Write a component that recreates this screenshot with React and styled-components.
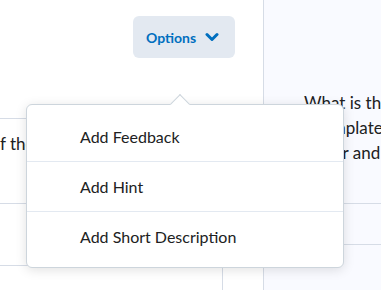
import React from 'react';
import styled, { createGlobalStyle } from 'styled-components';

const GlobalStyle = createGlobalStyle`
  html, body {
    margin: 0;
    padding: 0;
    background: #ffffff;
  }
  body {
    font-family: Lato, "Open Sans", sans-serif;
    color: #202122;
  }
  * {
    box-sizing: border-box;
  }
`;

const Page = styled.div`
  position: relative;
  display: grid;
  grid-template-columns: 264px 1fr;
  width: 381px;
  height: 290px;
  overflow: hidden;
`;

const EditorPane = styled.div`
  display: flex;
  flex-direction: column;
  border-right: 1px solid #d6dce6;
  background: #ffffff;
`;

const Toolbar = styled.div`
  display: flex;
  justify-content: flex-end;
  align-items: flex-start;
  height: 118px;
  padding: 16px 28px 0 0;
`;

const OptionsButton = styled.button`
  display: flex;
  align-items: center;
  gap: 9px;
  width: 102px;
  height: 42px;
  padding: 0 0 0 13px;
  border: none;
  border-radius: 6px;
  background: #e3e9f1;
  color: #006fbf;
  font-family: Lato, sans-serif;
  font-size: 14px;
  font-weight: 700;
  cursor: pointer;
`;

const Row = styled.div`
  height: ${p => p.$height}px;
  border-top: 1px solid #d6dce6;
  padding-top: 12px;
  font-size: 17px;
  line-height: 25px;
  white-space: nowrap;
  overflow: hidden;
`;

const FooterRow = styled.div`
  flex: 1;
  display: grid;
  grid-template-columns: 223px 1fr;
  border-top: 1px solid #d6dce6;
`;

const FooterCell = styled.div`
  border-right: ${p => (p.$divider ? '1px solid #d6dce6' : 'none')};
`;

const PreviewPane = styled.div`
  display: flex;
  flex-direction: column;
  background: #f9faff;
`;

const PreviewText = styled.div`
  height: 203px;
  padding: 90px 0 0 40px;
  font-size: 17px;
  line-height: 25px;
  white-space: nowrap;
  overflow: hidden;
`;

const PreviewRow = styled.div`
  height: ${p => p.$height}px;
  border-top: 1px solid #d6dce6;
`;

const Menu = styled.div`
  position: absolute;
  left: 26px;
  top: 104px;
  width: 318px;
  padding: 6px 0;
  background: #ffffff;
  border: 1px solid #cdd5dc;
  border-radius: 6px;
  box-shadow: 0 2px 12px rgba(0, 0, 0, 0.12);
`;

const Pointer = styled.span`
  position: absolute;
  left: 146px;
  top: -8px;
  width: 14px;
  height: 14px;
  background: #ffffff;
  border-top: 1px solid #cdd5dc;
  border-left: 1px solid #cdd5dc;
  transform: rotate(45deg);
`;

const MenuItem = styled.div`
  display: flex;
  align-items: center;
  height: 50px;
  padding-left: 53px;
  font-size: 16px;
  color: #202122;
  border-top: ${p => (p.$first ? 'none' : '1px solid #e3e9f1')};
`;

const Chevron = () => (
  <svg width="14" height="10" viewBox="0 0 14 10" fill="none">
    <path
      d="M2 2.5 L7 7.5 L12 2.5"
      stroke="#006fbf"
      strokeWidth="3"
      strokeLinecap="round"
      strokeLinejoin="round"
    />
  </svg>
);

const items = ['Add Feedback', 'Add Hint', 'Add Short Description'];

const App = () => (
  <>
    <GlobalStyle />
    <Page>
      <EditorPane>
        <Toolbar>
          <OptionsButton>
            Options
            <Chevron />
          </OptionsButton>
        </Toolbar>
        <Row $height={85}>f the following statements</Row>
        <Row $height={62} />
        <FooterRow>
          <FooterCell $divider />
          <FooterCell />
        </FooterRow>
      </EditorPane>
      <PreviewPane>
        <PreviewText>
          What is the
          <br />
          a template
          <br />
          a user and
        </PreviewText>
        <PreviewRow $height={41} />
        <PreviewRow $height={46} />
      </PreviewPane>
      <Menu>
        <Pointer />
        {items.map((label, i) => (
          <MenuItem key={label} $first={i === 0}>
            {label}
          </MenuItem>
        ))}
      </Menu>
    </Page>
  </>
);

export default App;
